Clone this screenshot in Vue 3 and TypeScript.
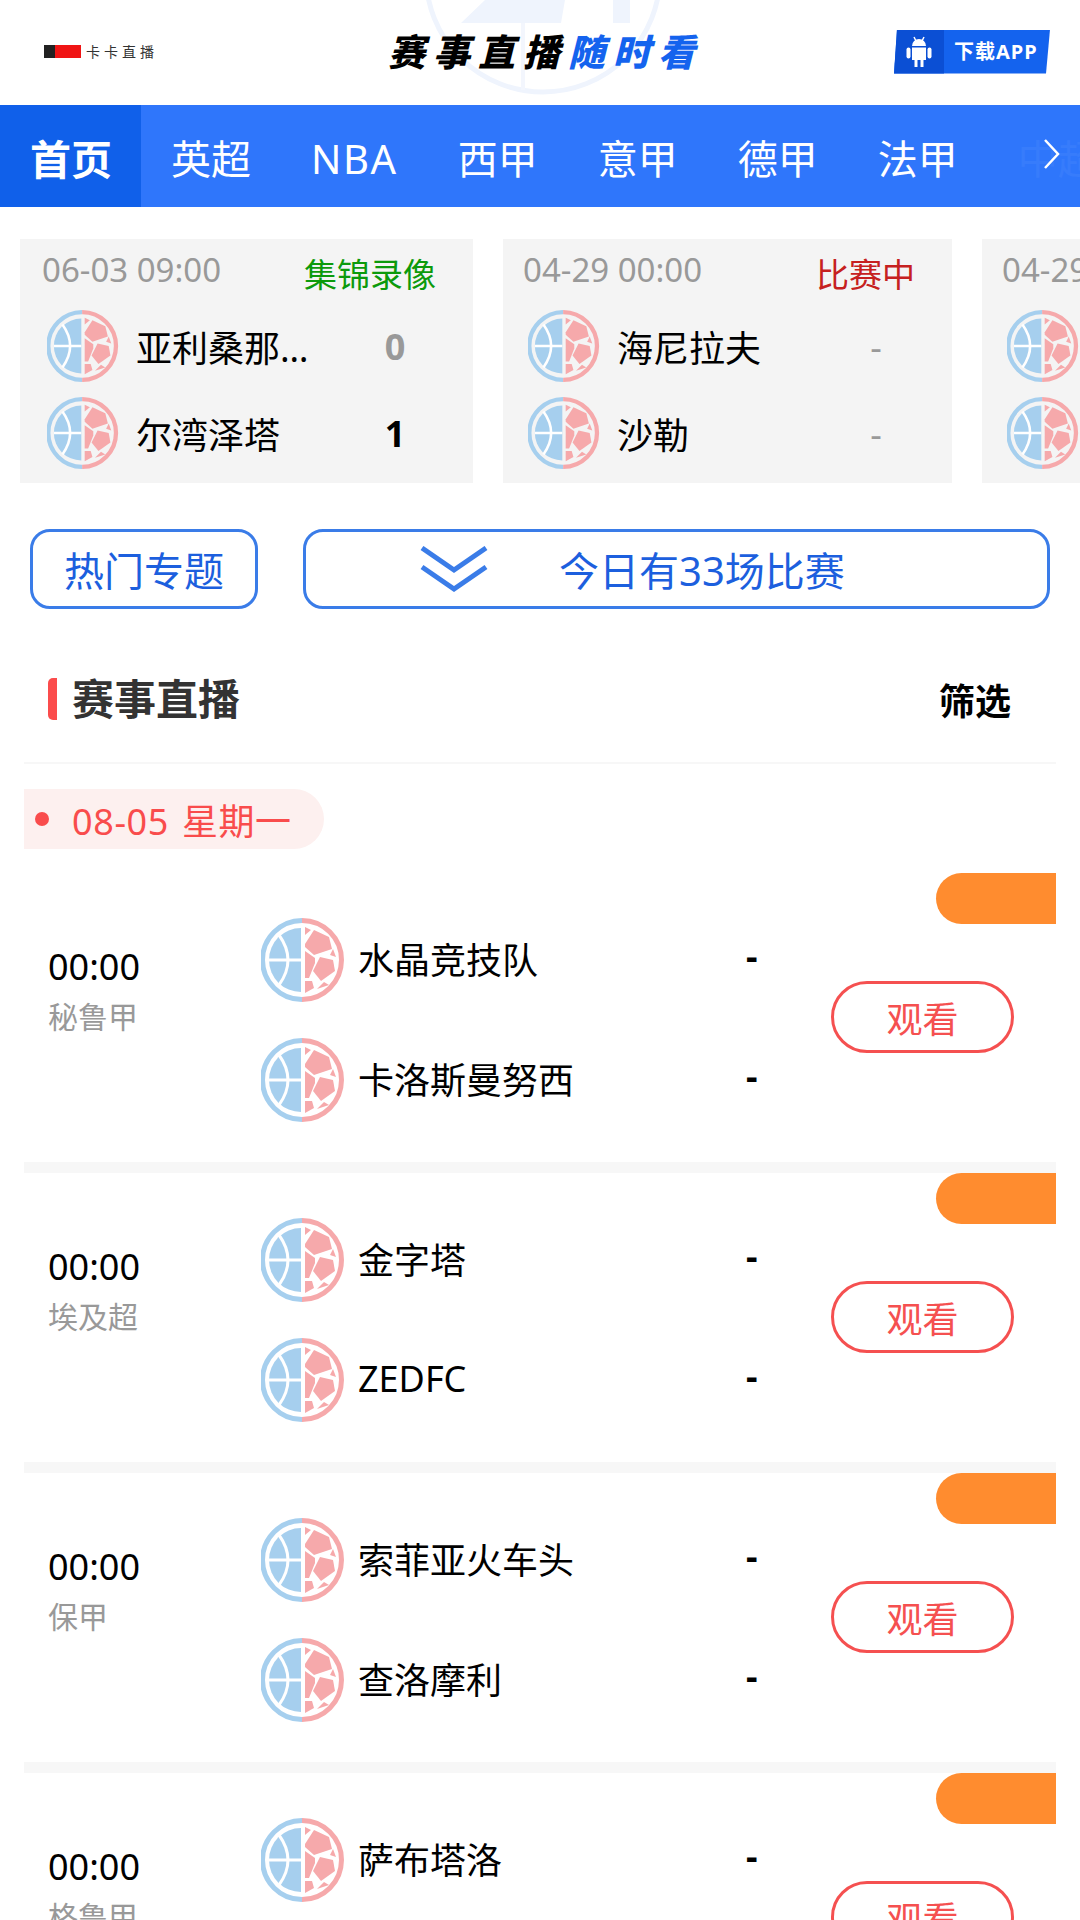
<script setup lang="ts">
interface Fixture {
  league: string;
  home: string;
  away: string;
}

const navItems = ["英超", "NBA", "西甲", "意甲", "德甲", "法甲", "中超"];

const cards = [
  { time: "06-03 09:00", status: "集锦录像", statusClass: "replay", home: "亚利桑那联", away: "尔湾泽塔", homeScore: "0", awayScore: "1" },
  { time: "04-29 00:00", status: "比赛中", statusClass: "live", home: "海尼拉夫", away: "沙勒", homeScore: "-", awayScore: "-" },
  { time: "04-29 00:00", status: "比赛中", statusClass: "live", home: "海尼拉夫", away: "沙勒", homeScore: "-", awayScore: "-" },
];

const fixtures: Fixture[] = [
  { league: "秘鲁甲", home: "水晶竞技队", away: "卡洛斯曼努西" },
  { league: "埃及超", home: "金字塔", away: "ZEDFC" },
  { league: "保甲", home: "索菲亚火车头", away: "查洛摩利" },
  { league: "格鲁甲", home: "萨布塔洛", away: "迪纳摩" },
];
</script>

<template>
  <div class="page">
    <svg class="defs" width="0" height="0" aria-hidden="true">
      <symbol id="ball" viewBox="0 0 84 84">
        <path d="M41 2.500A39.500 39.500 0 0 0 41 81.500" fill="none" stroke="#a6cfee" stroke-width="5" />
        <path d="M41 2.500A39.500 39.500 0 0 1 41 81.500" fill="none" stroke="#f6a9ab" stroke-width="5" />
        <path d="M40 10A32 32 0 0 0 40 74Z" fill="#a6cfee" />
        <path d="M8 42H40M18 17Q36 42 18 67" fill="none" stroke="#fff" stroke-width="3" />
        <g fill="#f6a9ab">
          <path d="M44 26L53 12L68 19L71 31L53 37L44 29Z" />
          <path d="M59 39L72 42L74 53L60 63L52 53Z" />
          <path d="M44 33L54 40L54 45L48 60L44 60Z" />
          <path d="M44 63L51 63L53 70L44 75Z" />
          <path d="M56 71L63 64L68 67Z" />
          <path d="M44 9L50 12L44 17Z" />
          <path d="M72 31L75 39L69 37Z" />
        </g>
      </symbol>
    </svg>

    <header class="top-bar">
      <div class="logo">
        <span class="logo-mark" />
        <span class="logo-text">卡卡直播</span>
      </div>
      <div class="slogan">
        <svg class="emblem" viewBox="0 0 240 100" aria-hidden="true">
          <circle cx="120" cy="-25" r="117" fill="none" stroke="#eff4fd" stroke-width="5" />
          <path d="M62 0L38 23H138L142 0ZM190 0V23H207V0Z" fill="#eff4fd" />
          <path d="M100 23V90" stroke="#f3f6fd" stroke-width="4" />
        </svg>
        <span class="slogan-text">赛事直播<em>随时看</em></span>
      </div>
      <div class="download">
        <span class="download-icon">
          <svg width="26" height="32" viewBox="0 0 26 32" aria-hidden="true">
            <path d="M6 10A7 7 0 0 1 20 10Z" fill="#fff" />
            <path d="M8 1L10 5M18 1L16 5" stroke="#fff" stroke-width="1.500" />
            <path d="M6 11.500H20V24H17.500V31H14.500V24H11.500V31H8.500V24H6Z" fill="#fff" />
            <rect x="0.500" y="11.500" width="4" height="11" rx="2" fill="#fff" />
            <rect x="21.500" y="11.500" width="4" height="11" rx="2" fill="#fff" />
          </svg>
        </span>
        <span class="download-text">下载APP</span>
      </div>
    </header>

    <nav class="nav">
      <a class="nav-item active">首页</a>
      <a v-for="item in navItems" :key="item" class="nav-item">{{ item }}</a>
      <span class="nav-more">
        <svg width="20" height="32" viewBox="0 0 20 32" aria-hidden="true">
          <path d="M3 2L16 16L3 30" fill="none" stroke="#fff" stroke-width="2.500" />
        </svg>
      </span>
    </nav>

    <section class="cards">
      <div v-for="(card, i) in cards" :key="i" class="card">
        <div class="card-head">
          <span class="card-time">{{ card.time }}</span>
          <span class="card-status" :class="card.statusClass">{{ card.status }}</span>
        </div>
        <div class="card-team">
          <svg class="card-ball"><use href="#ball" /></svg>
          <span class="card-name">{{ card.home }}</span>
          <span class="card-score" :class="{ dim: card.homeScore !== '-' }">{{ card.homeScore }}</span>
        </div>
        <div class="card-team">
          <svg class="card-ball"><use href="#ball" /></svg>
          <span class="card-name">{{ card.away }}</span>
          <span class="card-score">{{ card.awayScore }}</span>
        </div>
      </div>
    </section>

    <section class="actions">
      <button class="action hot">热门专题</button>
      <button class="action today">
        <svg width="68" height="46" viewBox="0 0 68 46" aria-hidden="true">
          <path d="M2 2L34 24L66 2M2 21L34 43L66 21" fill="none" stroke="#3a7ce8" stroke-width="5" />
        </svg>
        <span>今日有33场比赛</span>
      </button>
    </section>

    <main class="content">
      <div class="section-head">
        <h2 class="section-title">赛事直播</h2>
        <span class="filter">筛选</span>
      </div>

      <div class="date-pill"><i />08-05 星期一</div>

      <div v-for="fixture in fixtures" :key="fixture.home" class="fixture">
        <span class="tag" />
        <div class="fixture-time">
          <div class="kickoff">00:00</div>
          <div class="league">{{ fixture.league }}</div>
        </div>
        <div class="fixture-teams">
          <div class="team">
            <svg class="team-ball"><use href="#ball" /></svg>
            <span class="team-name">{{ fixture.home }}</span>
            <span class="team-score">-</span>
          </div>
          <div class="team">
            <svg class="team-ball"><use href="#ball" /></svg>
            <span class="team-name">{{ fixture.away }}</span>
            <span class="team-score">-</span>
          </div>
        </div>
        <button class="watch">观看</button>
      </div>
    </main>
  </div>
</template>

<style scoped>
.page {
  width: 1080px;
  height: 1920px;
  overflow: hidden;
  background: #fff;
  font-family: "Noto Sans", "Noto Sans CJK SC", sans-serif;
  color: #000;
}

.defs {
  position: absolute;
}

.top-bar {
  position: relative;
  display: flex;
  align-items: center;
  justify-content: space-between;
  height: 105px;
  padding: 0 30px 0 44px;
  overflow: hidden;
}

.logo {
  display: flex;
  align-items: center;
  gap: 5px;
  margin-bottom: 2px;
}

.logo-mark {
  width: 37px;
  height: 13px;
  background: linear-gradient(90deg, #222 0 30%, #f01414 30%);
}

.logo-text {
  font-size: 14px;
  line-height: 14px;
  letter-spacing: 4px;
  color: #333;
}

.slogan {
  position: absolute;
  left: 388px;
  top: 0;
  width: 310px;
  height: 105px;
}

.emblem {
  position: absolute;
  left: 35px;
  top: 0;
  width: 240px;
  height: 100px;
}

.slogan-text {
  position: relative;
  display: block;
  padding-top: 27px;
  font-size: 37px;
  line-height: 50px;
  font-weight: 900;
  font-style: italic;
  letter-spacing: 8px;
  white-space: nowrap;
}

.slogan-text em {
  color: #1463ee;
  font-style: italic;
}

.download {
  display: flex;
  width: 156px;
  height: 44px;
  margin-bottom: 2px;
  background: #1463ee;
  clip-path: polygon(3px 0, 100% 0, 152px 100%, 0 100%);
}

.download-icon {
  display: flex;
  align-items: center;
  justify-content: center;
  width: 50px;
  background: #0b4fd4;
}

.download-text {
  margin-left: 10px;
  font-size: 20px;
  line-height: 44px;
  font-weight: 700;
  letter-spacing: 1px;
  color: #fff;
  white-space: nowrap;
}

.nav {
  position: relative;
  display: flex;
  height: 102px;
  overflow: hidden;
  background: #2f76fb;
}

.nav-item {
  flex-shrink: 0;
  height: 102px;
  padding: 6px 30px 0;
  box-sizing: border-box;
  font-size: 40px;
  line-height: 96px;
  color: #fff;
  white-space: nowrap;
}

.nav-item.active {
  width: 141px;
  font-size: 41px;
  font-weight: 700;
  background: #1060ea;
}

.nav-item:nth-child(3) {
  letter-spacing: 1.6px;
}

.nav-item:nth-child(8) {
  opacity: 0.1;
}

.nav-more {
  position: absolute;
  right: 0;
  top: 0;
  display: flex;
  align-items: center;
  width: 60px;
  height: 100%;
  padding: 0 0 4px 22px;
  box-sizing: border-box;
  background: rgba(47, 118, 251, 0.6);
}

.cards {
  display: flex;
  gap: 30px;
  padding: 32px 0 0 20px;
  overflow: hidden;
}

.card {
  flex-shrink: 0;
  width: 453px;
  height: 244px;
  padding: 0 37px 0 22px;
  box-sizing: border-box;
  background: #f4f4f4;
}

.card:not(:first-child) {
  width: 449px;
  padding-left: 20px;
}

.card-head {
  display: flex;
  align-items: center;
  justify-content: space-between;
  height: 63px;
}

.card-time {
  margin-bottom: 2px;
  font-size: 33px;
  color: #999;
}

.card-status {
  margin-top: 4px;
  font-size: 33px;
}

.replay {
  color: #0c9a0c;
}

.live {
  color: #c62020;
}

.card-team {
  display: flex;
  align-items: center;
  height: 87px;
  padding-left: 5px;
}

.card-ball {
  flex-shrink: 0;
  width: 72px;
  height: 72px;
}

.card-name {
  width: 178px;
  margin: 2px 0 0 17px;
  overflow: hidden;
  font-size: 36px;
  text-overflow: ellipsis;
  white-space: nowrap;
}

.card-score {
  width: 50px;
  margin: 2px 0 0 56px;
  font-size: 36px;
  font-weight: 700;
  text-align: center;
  color: #000;
}

.card-score.dim {
  color: #999;
}

.card:not(:first-child) .card-score {
  font-weight: 400;
  color: #999;
}

.actions {
  display: flex;
  gap: 45px;
  padding: 46px 30px 0;
}

.action {
  display: flex;
  align-items: center;
  justify-content: center;
  height: 80px;
  padding: 0;
  font: inherit;
  font-size: 40px;
  color: #1c5fde;
  background: #fff;
  border: 3px solid #3a7ce8;
  border-radius: 20px;
  box-sizing: border-box;
}

.hot {
  width: 228px;
}

.today {
  flex: 1;
  justify-content: flex-start;
  gap: 71px;
  padding-left: 114px;
}

.content {
  margin: 0 24px;
}

.section-head {
  display: flex;
  align-items: center;
  justify-content: space-between;
  height: 127px;
  padding: 26px 45px 0 24px;
  border-bottom: 2px solid #f7f7f7;
}

.section-title {
  margin: 0;
  padding-left: 15px;
  font-size: 42px;
  line-height: 42px;
  font-weight: 700;
  color: #333;
  border-left: 9px solid #fb4c4c;
  border-radius: 5px;
}

.filter {
  margin-top: 2px;
  font-size: 36px;
  font-weight: 700;
}

.date-pill {
  display: flex;
  align-items: center;
  gap: 23px;
  width: 300px;
  height: 60px;
  margin: 25px 0 24px;
  padding-left: 11px;
  box-sizing: border-box;
  font-size: 36px;
  letter-spacing: 0.6px;
  word-spacing: 3px;
  color: #f94c4c;
  background: #fdf0ef;
  border-radius: 0 30px 30px 0;
}

.date-pill i {
  width: 14px;
  height: 14px;
  background: #f94c4c;
  border-radius: 50%;
}

.fixture {
  position: relative;
  display: flex;
  align-items: center;
  height: 289px;
  padding: 0 42px 0 24px;
  border-bottom: 11px solid #f7f7f7;
}

.tag {
  position: absolute;
  top: 0;
  right: 0;
  width: 120px;
  height: 51px;
  background: #ff8c2f;
  border-radius: 26px 0 0 26px;
}

.fixture-time {
  width: 213px;
  margin-bottom: 59px;
}

.kickoff {
  font-size: 36px;
  line-height: 58px;
}

.league {
  font-size: 30px;
  line-height: 42px;
  color: #999;
}

.fixture-teams {
  display: flex;
  flex-direction: column;
  gap: 36px;
  width: 570px;
  margin-top: 4px;
}

.team {
  display: flex;
  align-items: center;
  height: 84px;
}

.team-ball {
  flex-shrink: 0;
  width: 84px;
  height: 84px;
}

.team-name {
  width: 388px;
  margin: 0 0 3px 13px;
  font-size: 36px;
  white-space: nowrap;
}

.team-score {
  margin-bottom: 9px;
  font-size: 36px;
  font-weight: 700;
}

.watch {
  flex-shrink: 0;
  width: 183px;
  height: 72px;
  margin-bottom: 1px;
  padding: 0;
  font: inherit;
  font-size: 36px;
  color: #f55050;
  background: #fff;
  border: 3px solid #f55050;
  border-radius: 36px;
  box-sizing: border-box;
}
</style>
